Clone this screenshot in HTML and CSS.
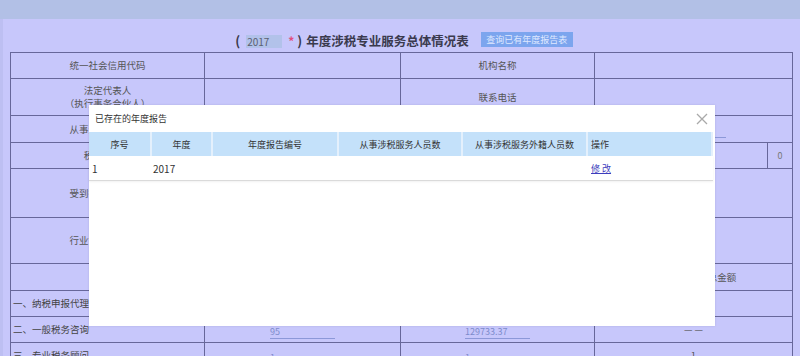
FILE: index.html
```html
<!DOCTYPE html>
<html lang="zh-CN">
<head>
<meta charset="utf-8">
<title>年度涉税专业服务总体情况表</title>
<link rel="stylesheet" href="styles.css">
</head>
<body>
<div class="topbar"></div>
<div class="page">
  <div class="titlerow">
    <span class="paren">(</span>
    <span class="yearbox">2017</span>
    <span class="star">*</span>
    <span class="paren rp">)</span>
    <span class="title">年度涉税专业服务总体情况表</span>
    <span class="btn">查询已有年度报告表</span>
  </div>
  <div class="sheet">
    <div class="row r1"><div>统一社会信用代码</div><div></div><div>机构名称</div><div></div></div>
    <div class="row r2"><div class="two">法定代表人<br>（执行事务合伙人）</div><div></div><div>联系电话</div><div></div></div>
    <div class="row r3"><div>从事涉税服务人数</div><div></div><div></div><div><span class="inp"></span></div></div>
    <div class="row r4 split"><div>税务师人数</div><div></div><div></div><div></div><div class="num">0</div></div>
    <div class="row r5"><div>受到行政处罚情况</div><div></div><div></div><div></div></div>
    <div class="row r6"><div>行业协会会员情况</div><div></div><div></div><div></div></div>
    <div class="row r7"><div></div><div>户数</div><div>收入金额</div><div>涉税服务收入总金额</div></div>
    <div class="row r8 lower"><div>一、纳税申报代理</div><div></div><div></div><div></div></div>
    <div class="row r9 lower"><div>二、一般税务咨询</div><div><span class="inp">95</span></div><div><span class="inp">129733.37</span></div><div class="dash">— —</div></div>
    <div class="row r10 lower"><div>三、专业税务顾问</div><div><span class="inp">1</span></div><div><span class="inp">1</span></div><div class="dash">1</div></div>
  </div>
</div>

<div class="dialog">
  <div class="dlg-head">
    <span class="dlg-title">已存在的年度报告</span>
    <svg class="close" width="12" height="12" viewBox="0 0 12 12"><path d="M1 1 L11 11 M11 1 L1 11" stroke="#a9a9a9" stroke-width="1.3" fill="none"/></svg>
  </div>
  <div class="dt-row dt-head">
    <div>序号</div><div>年度</div><div>年度报告编号</div><div>从事涉税服务人员数</div><div>从事涉税服务外籍人员数</div><div class="left">操作</div>
  </div>
  <div class="dt-row dt-body">
    <div>1</div><div class="c2">2017</div><div></div><div></div><div></div><div><a class="link" href="#">修 改</a></div>
  </div>
</div>
</body>
</html>
```

FILE: styles.css
```css
html, body {
  margin: 0;
  padding: 0;
}
body {
  width: 800px;
  height: 356px;
  overflow: hidden;
  background: #c7c7fb;
  font-family: "Noto Sans CJK SC", "Noto Sans", sans-serif;
  color: #555;
  position: relative;
}
.topbar {
  height: 19px;
  background: #b2c0e6;
}
.page {
  border-left: 3px solid #bdbff2;
  height: 337px;
  overflow: hidden;
}
.titlerow {
  height: 33px;
  display: flex;
  justify-content: center;
  padding-left: 5px;
  box-sizing: border-box;
}
.paren {
  margin-top: 14px;
  font-size: 13px;
  line-height: 15px;
  height: 15px;
  color: #3a3a4e;
  font-weight: bold;
}
.yearbox {
  margin-top: 16px;
  margin-left: 6px;
  width: 36px;
  height: 13px;
  box-sizing: border-box;
  padding-left: 1px;
  background: #b2c2ea;
  font-size: 10px;
  line-height: 13px;
  color: #5a6070;
}
.star {
  margin-top: 14px;
  margin-left: 6px;
  font-size: 12px;
  line-height: 15px;
  color: #e0507e;
  font-weight: bold;
}
.rp {
  margin-left: 3px;
}
.title {
  margin-top: 14px;
  margin-left: 4px;
  font-size: 12.5px;
  line-height: 15px;
  font-weight: bold;
  color: #3a3a4e;
}
.btn {
  margin-top: 13px;
  margin-left: 12px;
  width: 92px;
  height: 15px;
  background: #7ca5ee;
  color: #dfe8ff;
  font-size: 9px;
  line-height: 15px;
  text-align: center;
}
.sheet {
  margin-left: 7px;
  width: 783px;
  border: 1px solid #67679a;
  box-sizing: border-box;
}
.row {
  display: grid;
  grid-template-columns: 194px 196px 194px 197px;
  border-bottom: 1px solid #67679a;
  box-sizing: border-box;
  font-size: 9.5px;
  color: #555;
}
.row > div {
  border-right: 1px solid #67679a;
  display: flex;
  align-items: center;
  justify-content: center;
  text-align: center;
  line-height: 13px;
}
.row > div:last-child {
  border-right: none;
}
.row.split {
  grid-template-columns: 194px 196px 194px 173px 24px;
}
.r1 { height: 26px; }
.r2 { height: 37px; }
.r3 { height: 27px; }
.r4 { height: 26px; }
.r5 { height: 49px; }
.r6 { height: 46px; }
.r7 { height: 27px; }
.r8 { height: 26px; }
.r9 { height: 26px; }
.r10 { height: 26px; }
.lower > div:first-child {
  justify-content: flex-start;
  padding-left: 2px;
  color: #444;
}
.num {
  color: #777;
  font-size: 9px;
}
.dash {
  color: #555;
}
.inp {
  display: block;
  width: 65px;
  height: 14px;
  margin-top: 4px;
  border-bottom: 1px solid #8c98d8;
  box-sizing: border-box;
  text-align: left;
  font-size: 9px;
  line-height: 13px;
  color: #7d8bcc;
}
.dialog {
  position: absolute;
  left: 89px;
  top: 105px;
  width: 626px;
  height: 221px;
  background: #fff;
  box-shadow: 0 0 2px rgba(60, 60, 90, 0.15);
}
.dlg-head {
  height: 27px;
  display: flex;
  align-items: center;
  justify-content: space-between;
  padding: 0 7px 0 6px;
}
.dlg-title {
  font-size: 9px;
  color: #333;
}
.close {
  display: block;
}
.dt-row {
  display: grid;
  grid-template-columns: 63px 61px 126px 124px 125px 125px;
  height: 24px;
  font-size: 9px;
  color: #333;
}
.dt-head > div {
  background: #c4e1fa;
  border-right: 2px solid #e4f0fc;
  display: flex;
  align-items: center;
  justify-content: center;
}
.dt-head > div.left {
  justify-content: flex-start;
  padding-left: 3px;
}
.dt-body {
  border-bottom: 1px solid #dadada;
  box-shadow: 0 1px 2px rgba(0, 0, 0, 0.06);
  height: 25px;
  box-sizing: border-box;
  width: 624px;
}
.dt-body > div {
  display: flex;
  align-items: center;
  padding-left: 3px;
  font-size: 10px;
}
.dt-body > div.c2 {
  padding-left: 1px;
}
.link {
  color: #3d3dbd;
  text-decoration: underline;
  font-size: 9px;
}
```
